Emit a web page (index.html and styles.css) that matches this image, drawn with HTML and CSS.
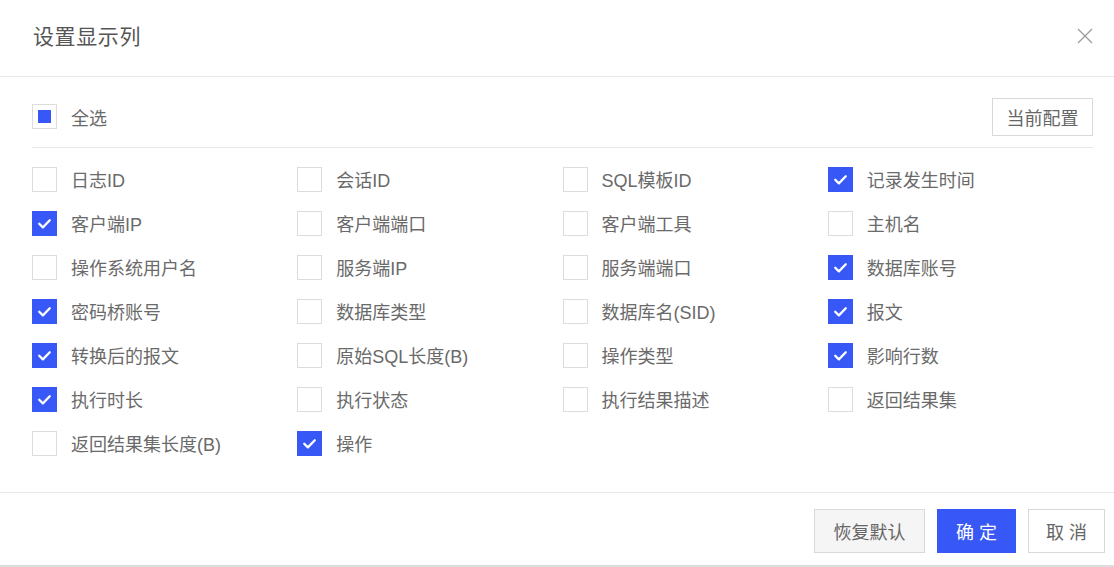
FILE: index.html
```html
<!DOCTYPE html>
<html lang="zh-CN">
<head>
<meta charset="utf-8">
<link rel="stylesheet" href="styles.css">
</head>
<body>
<div class="dialog">
  <div class="header">
    <div class="title">设置显示列</div>
    <svg class="close" width="16" height="16" viewBox="0 0 16 16"><path d="M1 1L15 15M15 1L1 15" stroke="#9a9a9a" stroke-width="1.3" fill="none"/></svg>
  </div>
  <div class="body">
    <div class="toolbar">
      <label class="item"><span class="box part"><span class="dot"></span></span><span class="lbl">全选</span></label>
      <button class="btn cfg">当前配置</button>
    </div>
    <div class="grid">
      <label class="item"><span class="box"></span><span class="lbl">日志ID</span></label>
      <label class="item"><span class="box"></span><span class="lbl">会话ID</span></label>
      <label class="item"><span class="box"></span><span class="lbl">SQL模板ID</span></label>
      <label class="item"><span class="box on"><svg viewBox="0 0 24 24"><path d="M6.5 12.2L10.3 16L17.5 8.6" stroke="#fff" stroke-width="2.4" fill="none" stroke-linecap="round" stroke-linejoin="round"/></svg></span><span class="lbl">记录发生时间</span></label>

      <label class="item"><span class="box on"><svg viewBox="0 0 24 24"><path d="M6.5 12.2L10.3 16L17.5 8.6" stroke="#fff" stroke-width="2.4" fill="none" stroke-linecap="round" stroke-linejoin="round"/></svg></span><span class="lbl">客户端IP</span></label>
      <label class="item"><span class="box"></span><span class="lbl">客户端端口</span></label>
      <label class="item"><span class="box"></span><span class="lbl">客户端工具</span></label>
      <label class="item"><span class="box"></span><span class="lbl">主机名</span></label>

      <label class="item"><span class="box"></span><span class="lbl">操作系统用户名</span></label>
      <label class="item"><span class="box"></span><span class="lbl">服务端IP</span></label>
      <label class="item"><span class="box"></span><span class="lbl">服务端端口</span></label>
      <label class="item"><span class="box on"><svg viewBox="0 0 24 24"><path d="M6.5 12.2L10.3 16L17.5 8.6" stroke="#fff" stroke-width="2.4" fill="none" stroke-linecap="round" stroke-linejoin="round"/></svg></span><span class="lbl">数据库账号</span></label>

      <label class="item"><span class="box on"><svg viewBox="0 0 24 24"><path d="M6.5 12.2L10.3 16L17.5 8.6" stroke="#fff" stroke-width="2.4" fill="none" stroke-linecap="round" stroke-linejoin="round"/></svg></span><span class="lbl">密码桥账号</span></label>
      <label class="item"><span class="box"></span><span class="lbl">数据库类型</span></label>
      <label class="item"><span class="box"></span><span class="lbl">数据库名(SID)</span></label>
      <label class="item"><span class="box on"><svg viewBox="0 0 24 24"><path d="M6.5 12.2L10.3 16L17.5 8.6" stroke="#fff" stroke-width="2.4" fill="none" stroke-linecap="round" stroke-linejoin="round"/></svg></span><span class="lbl">报文</span></label>

      <label class="item"><span class="box on"><svg viewBox="0 0 24 24"><path d="M6.5 12.2L10.3 16L17.5 8.6" stroke="#fff" stroke-width="2.4" fill="none" stroke-linecap="round" stroke-linejoin="round"/></svg></span><span class="lbl">转换后的报文</span></label>
      <label class="item"><span class="box"></span><span class="lbl">原始SQL长度(B)</span></label>
      <label class="item"><span class="box"></span><span class="lbl">操作类型</span></label>
      <label class="item"><span class="box on"><svg viewBox="0 0 24 24"><path d="M6.5 12.2L10.3 16L17.5 8.6" stroke="#fff" stroke-width="2.4" fill="none" stroke-linecap="round" stroke-linejoin="round"/></svg></span><span class="lbl">影响行数</span></label>

      <label class="item"><span class="box on"><svg viewBox="0 0 24 24"><path d="M6.5 12.2L10.3 16L17.5 8.6" stroke="#fff" stroke-width="2.4" fill="none" stroke-linecap="round" stroke-linejoin="round"/></svg></span><span class="lbl">执行时长</span></label>
      <label class="item"><span class="box"></span><span class="lbl">执行状态</span></label>
      <label class="item"><span class="box"></span><span class="lbl">执行结果描述</span></label>
      <label class="item"><span class="box"></span><span class="lbl">返回结果集</span></label>

      <label class="item"><span class="box"></span><span class="lbl">返回结果集长度(B)</span></label>
      <label class="item"><span class="box on"><svg viewBox="0 0 24 24"><path d="M6.5 12.2L10.3 16L17.5 8.6" stroke="#fff" stroke-width="2.4" fill="none" stroke-linecap="round" stroke-linejoin="round"/></svg></span><span class="lbl">操作</span></label>
    </div>
  </div>
  <div class="footer">
    <button class="btn reset">恢复默认</button>
    <button class="btn primary">确 定</button>
    <button class="btn cancel">取 消</button>
  </div>
</div>
</body>
</html>
```

FILE: styles.css
```css
* { box-sizing: border-box; }
html, body { margin: 0; padding: 0; background: #fff; }
body {
  font-family: "Liberation Sans", "Noto Sans CJK SC", sans-serif;
  color: #666;
  width: 1114px;
  height: 567px;
  overflow: hidden;
}
.dialog {
  width: 1114px;
  height: 567px;
  display: flex;
  flex-direction: column;
  border-bottom: 2px solid #dcdcdc;
}
.header {
  height: 77px;
  display: flex;
  align-items: center;
  justify-content: space-between;
  padding: 0 21px 6px 33px;
  border-bottom: 1px solid #e8e8e8;
}
.title {
  font-size: 21px;
  color: #555;
  letter-spacing: 0.6px;
}
.close { display: block; margin-top: 2px; }
.body {
  padding: 0 21px 0 32px;
  flex: 1;
}
.toolbar {
  height: 71px;
  display: flex;
  align-items: center;
  justify-content: space-between;
  border-bottom: 1px solid #e8e8e8;
  padding-top: 9px;
}
.item {
  display: flex;
  align-items: center;
  gap: 14px;
  font-size: 18px;
  color: #6a6a6a;
  height: 44px;
}
.box {
  width: 25px;
  height: 25px;
  border: 1px solid #dcdcdc;
  background: #fff;
  display: flex;
  align-items: center;
  justify-content: center;
  flex: none;
}
.box.on {
  background: #3758f6;
  border-color: #3758f6;
}
.box svg { width: 23px; height: 23px; display: block; }
.box .dot {
  width: 13px;
  height: 13px;
  background: #3758f6;
}
.grid {
  display: grid;
  grid-template-columns: repeat(4, 1fr);
  grid-auto-rows: 44px;
  padding-top: 9px;
}
.btn {
  font-family: inherit;
  font-size: 18px;
  color: #666;
  background: #fff;
  border: 1px solid #d9d9d9;
  padding: 0;
  cursor: pointer;
}
.cfg {
  width: 101px;
  height: 38px;
}
.footer {
  height: 73px;
  border-top: 1px solid #e8e8e8;
  display: flex;
  justify-content: flex-end;
  align-items: flex-start;
  gap: 12px;
  padding: 16px 9px 0 0;
}
.footer .btn { height: 44px; }
.reset { width: 111px; background: #f5f5f5; }
.primary { width: 79px; background: #3758f6; border-color: #3758f6; color: #fff; }
.cancel { width: 77px; }
```
